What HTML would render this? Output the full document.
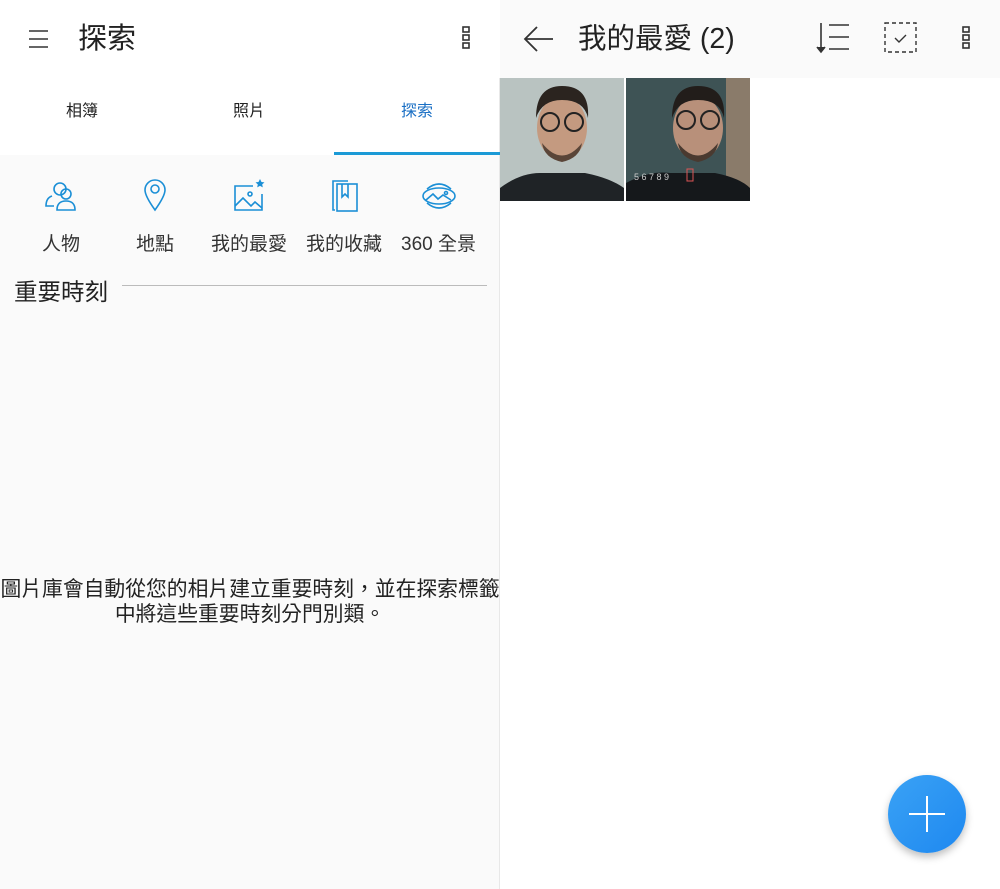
<!DOCTYPE html>
<html><head><meta charset="utf-8"><style>
*{margin:0;padding:0;box-sizing:border-box}
body{width:1000px;height:889px;overflow:hidden;font-family:"Liberation Sans","Noto Sans CJK TC",sans-serif;background:#fff;position:relative}
.a{position:absolute}
.t{white-space:nowrap;color:#222}
</style></head><body>
<div class="a" style="left:0;top:0;width:500px;height:155px;background:#fff"></div>
<div class="a" style="left:0;top:155px;width:500px;height:734px;background:#fafafa"></div>
<div class="a" style="left:499px;top:78px;width:1px;height:811px;background:#e8e8e8"></div>
<svg class="a" style="left:28px;top:28px" width="22" height="22"><g stroke="#333" stroke-width="1.6"><line x1="1" y1="3" x2="20" y2="3"/><line x1="1" y1="11" x2="20" y2="11"/><line x1="1" y1="19" x2="20" y2="19"/></g></svg>
<div class="a t" style="left:78px;top:20px;font-size:29px;line-height:38px">探索</div>
<svg class="a" style="left:461px;top:25px" width="12" height="26"><g fill="none" stroke="#333" stroke-width="1.6"><rect x="2" y="2" width="6" height="5"/><rect x="2" y="10" width="6" height="5"/><rect x="2" y="18" width="6" height="5"/></g></svg>
<div class="a t" style="left:66px;top:97px;font-size:16px">相簿</div>
<div class="a t" style="left:233px;top:97px;font-size:16px">照片</div>
<div class="a t" style="left:401px;top:97px;font-size:16px;color:#1a6fc4">探索</div>
<div class="a" style="left:334px;top:152px;width:166px;height:3px;background:#1b9ad6"></div>
<svg class="a" style="left:44px;top:180px" width="36" height="32" fill="none" stroke="#1b8fd6" stroke-width="1.6"><circle cx="16" cy="9" r="6"/><path d="M8 16 Q2 18 2 26 H10"/><circle cx="22" cy="14" r="5"/><path d="M13 30 Q13 21 22 21 Q31 21 31 30 Z"/></svg>
<svg class="a" style="left:143px;top:178px" width="24" height="34" fill="none" stroke="#1b8fd6" stroke-width="1.6"><path d="M12 32 Q2 18 2 12 A10 10 0 0 1 22 12 Q22 18 12 32Z"/><circle cx="12" cy="11" r="4"/></svg>
<svg class="a" style="left:233px;top:178px" width="34" height="34" fill="none" stroke="#1b8fd6" stroke-width="1.6"><path d="M20 8 H2 V32 H29 V16"/><path d="M2 28 L10 20 L18 28 L22 24 L29 30"/><circle cx="17" cy="16" r="2"/><path d="M27 1 l1.5 3 3 .4 -2.3 2 .6 3 -2.8-1.5 -2.8 1.5 .6-3 -2.3-2 3-.4z" fill="#1b8fd6" stroke="none"/></svg>
<svg class="a" style="left:330px;top:179px" width="30" height="34" fill="none" stroke="#1b8fd6" stroke-width="1.6"><path d="M5 31 H3 V2 H18"/><rect x="7" y="5" width="20" height="27"/><path d="M12 5 V18 L15 15 L18 18 V5"/></svg>
<svg class="a" style="left:421px;top:181px" width="36" height="30" fill="none" stroke="#1b8fd6" stroke-width="1.6"><ellipse cx="18" cy="15" rx="16" ry="8"/><path d="M6 8 Q18 -2 30 8"/><path d="M6 22 Q18 32 30 22"/><path d="M5 19 L12 13 L17 18 L22 14 L30 19"/><circle cx="25" cy="12" r="1.5"/></svg>
<div class="a t" style="left:42px;top:229px;font-size:19px;color:#333">人物</div>
<div class="a t" style="left:136px;top:229px;font-size:19px;color:#333">地點</div>
<div class="a t" style="left:211px;top:229px;font-size:19px;color:#333">我的最愛</div>
<div class="a t" style="left:306px;top:229px;font-size:19px;color:#333">我的收藏</div>
<div class="a t" style="left:401px;top:229px;font-size:19px;color:#333">360 全景</div>
<div class="a t" style="left:14px;top:273px;font-size:23.5px">重要時刻</div>
<div class="a" style="left:122px;top:285px;width:365px;height:1px;background:#bbb"></div>
<div class="a" style="left:-10px;top:577px;width:520px;text-align:center;font-size:20.8px;line-height:25px;color:#222;white-space:nowrap">圖片庫會自動從您的相片建立重要時刻，並在探索標籤<br>中將這些重要時刻分門別類。</div>
<div class="a" style="left:500px;top:0;width:500px;height:78px;background:#fafafa"></div>
<svg class="a" style="left:522px;top:24px" width="34" height="30" fill="none" stroke="#333" stroke-width="1.8"><path d="M31 15 H3 M15 3 L3 15 L15 27"/></svg>
<div class="a t" style="left:578px;top:20px;font-size:28.5px;line-height:38px">我的最愛 (2)</div>
<svg class="a" style="left:815px;top:21px" width="36" height="34" fill="none" stroke="#333" stroke-width="1.6"><path d="M6 2 V30"/><path d="M2 26 L6 31 L10 26" fill="#333"/><path d="M14 4 H34 M14 16 H34 M14 28 H34"/></svg>
<svg class="a" style="left:884px;top:22px" width="34" height="32" fill="none" stroke="#333" stroke-width="1.4" stroke-dasharray="4 3"><rect x="1" y="1" width="31" height="29"/><path d="M11 16 L15 20 L22 13" stroke-dasharray="none"/></svg>
<svg class="a" style="left:961px;top:25px" width="12" height="26"><g fill="none" stroke="#333" stroke-width="1.6"><rect x="2" y="2" width="6" height="5"/><rect x="2" y="10" width="6" height="5"/><rect x="2" y="18" width="6" height="5"/></g></svg>
<svg class="a" style="left:500px;top:78px" width="250" height="124">
<rect x="0" y="0" width="124" height="123" fill="#b9c3c1"/>
<path d="M0 123 V110 Q20 95 40 95 L85 95 Q110 100 124 110 V123Z" fill="#1f2326"/>
<ellipse cx="62" cy="50" rx="25" ry="32" fill="#c49a80"/>
<path d="M36 40 Q36 8 62 8 Q90 8 88 40 Q84 22 62 22 Q42 22 36 40Z" fill="#2b241f"/>
<circle cx="50" cy="44" r="9" fill="none" stroke="#222" stroke-width="2"/><circle cx="74" cy="44" r="9" fill="none" stroke="#222" stroke-width="2"/>
<path d="M42 65 Q62 90 82 65 Q80 80 62 84 Q44 80 42 65Z" fill="#5a4538"/>
<rect x="126" y="0" width="124" height="123" fill="#3e5355"/>
<rect x="226" y="0" width="24" height="123" fill="#8a7b6a"/>
<path d="M126 123 V105 Q150 92 170 95 L215 95 Q240 100 250 110 V123Z" fill="#15181b"/>
<ellipse cx="198" cy="50" rx="25" ry="32" fill="#b8907a"/>
<path d="M172 40 Q172 8 198 8 Q226 8 224 40 Q220 22 198 22 Q178 22 172 40Z" fill="#221d1a"/>
<circle cx="186" cy="42" r="9" fill="none" stroke="#222" stroke-width="2"/><circle cx="210" cy="42" r="9" fill="none" stroke="#222" stroke-width="2"/>
<path d="M178 65 Q198 90 218 65 Q216 80 198 84 Q180 80 178 65Z" fill="#4a3a30"/>
<text x="134" y="102" font-size="9" fill="#ccc" font-family="Liberation Sans">5 6 7 8 9</text>
<rect x="187" y="91" width="6" height="12" fill="none" stroke="#d55" stroke-width="1"/>
<rect x="125" y="0" width="1" height="124" fill="#fff"/>
</svg>
<div class="a" style="left:888px;top:775px;width:78px;height:78px;border-radius:50%;background:linear-gradient(135deg,#3aa2f5,#1e88f0);box-shadow:0 4px 8px rgba(0,0,0,.25)"></div>
<div class="a" style="left:909px;top:813px;width:36px;height:2px;background:#fff"></div>
<div class="a" style="left:926px;top:796px;width:2px;height:36px;background:#fff"></div>
</body></html>
